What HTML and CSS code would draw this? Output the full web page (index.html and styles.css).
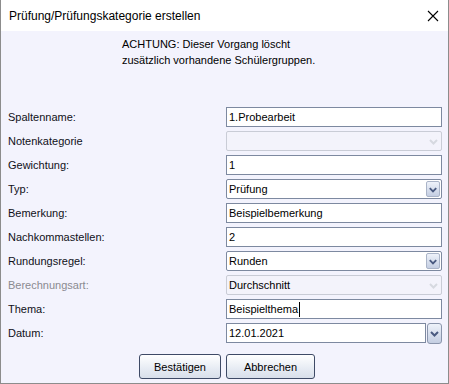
FILE: index.html
```html
<!DOCTYPE html>
<html lang="de">
<head>
<meta charset="utf-8">
<title>Prüfung/Prüfungskategorie erstellen</title>
<link rel="stylesheet" href="styles.css">
</head>
<body>
<div class="window">
  <div class="titlebar">
    <span class="title">Prüfung/Prüfungskategorie erstellen</span>
    <svg class="close" width="12" height="12" viewBox="0 0 12 12"><path d="M1 1 L11 11 M11 1 L1 11" stroke="#000" stroke-width="1.1" fill="none"/></svg>
  </div>
  <div class="body">
    <div class="notice">ACHTUNG: Dieser Vorgang löscht<br>zusätzlich vorhandene Schülergruppen.</div>
    <div class="form">
      <div class="label">Spaltenname:</div>
      <div class="field"><span class="val">1.Probearbeit</span></div>

      <div class="label">Notenkategorie</div>
      <div class="field combo disabled"><span class="val"></span><span class="arrow"><svg width="13" height="15" viewBox="0 0 13 15"><path d="M3 6 L6.5 9.5 L10 6" stroke="#d6d9e0" stroke-width="2" fill="none"/></svg></span></div>

      <div class="label">Gewichtung:</div>
      <div class="field"><span class="val">1</span></div>

      <div class="label">Typ:</div>
      <div class="field combo"><span class="val">Prüfung</span><span class="arrow btn"><svg width="13" height="15" viewBox="0 0 13 15"><path d="M3 6 L6.5 9.5 L10 6" stroke="#4a5a80" stroke-width="2" fill="none"/></svg></span></div>

      <div class="label">Bemerkung:</div>
      <div class="field"><span class="val">Beispielbemerkung</span></div>

      <div class="label">Nachkommastellen:</div>
      <div class="field"><span class="val">2</span></div>

      <div class="label">Rundungsregel:</div>
      <div class="field combo"><span class="val">Runden</span><span class="arrow btn"><svg width="13" height="15" viewBox="0 0 13 15"><path d="M3 6 L6.5 9.5 L10 6" stroke="#4a5a80" stroke-width="2" fill="none"/></svg></span></div>

      <div class="label muted">Berechnungsart:</div>
      <div class="field combo disabled"><span class="val">Durchschnitt</span><span class="arrow"><svg width="13" height="15" viewBox="0 0 13 15"><path d="M3 6 L6.5 9.5 L10 6" stroke="#d6d9e0" stroke-width="2" fill="none"/></svg></span></div>

      <div class="label">Thema:</div>
      <div class="field"><span class="val">Beispielthema</span><span class="caret"></span></div>

      <div class="label">Datum:</div>
      <div class="datum">
        <div class="field date"><span class="val">12.01.2021</span></div>
        <span class="datebtn"><svg width="13" height="15" viewBox="0 0 13 15"><path d="M3 6 L6.5 9.5 L10 6" stroke="#4a5a80" stroke-width="2" fill="none"/></svg></span>
      </div>
    </div>
    <div class="buttons">
      <button class="button b1">Bestätigen</button>
      <button class="button b2">Abbrechen</button>
    </div>
  </div>
</div>
</body>
</html>
```
FILE: styles.css
```css
html, body {
  margin: 0;
  padding: 0;
  background: #ffffff;
}
.window {
  width: 449px;
  height: 384px;
  box-sizing: border-box;
  border-left: 1px solid #8c8c8c;
  border-right: 1px solid #8c8c8c;
  border-bottom: 1px solid #8c8c8c;
  display: flex;
  flex-direction: column;
  font-family: "Liberation Sans", Arial, sans-serif;
  font-size: 11px;
  color: #101018;
}
.titlebar {
  height: 31px;
  background: #ffffff;
  display: flex;
  align-items: center;
  justify-content: space-between;
  padding: 0 9px 0 8px;
  flex: none;
}
.title {
  font-size: 12px;
  color: #000;
}
.close {
  display: block;
}
.body {
  flex: 1;
  background: #f3f3fd;
  padding-top: 5px;
}
.notice {
  margin-left: 121px;
  line-height: 16px;
  color: #000;
}
.form {
  margin-top: 39px;
  display: grid;
  grid-template-columns: 225px 216px;
  grid-auto-rows: 20px;
  row-gap: 4px;
}
.label {
  padding-left: 7px;
  display: flex;
  align-items: center;
  color: #101018;
}
.label.muted {
  color: #8a8a90;
}
.field {
  box-sizing: border-box;
  height: 20px;
  border: 1px solid #7d89a0;
  background: #ffffff;
  display: flex;
  align-items: center;
  padding-left: 2px;
}
.val {
  color: #000;
}
.combo {
  justify-content: space-between;
  padding-right: 1px;
  border-radius: 2px;
}
.combo.disabled {
  background: #f3f3fb;
  border-color: #c9ccd6;
}
.arrow {
  width: 14px;
  height: 16px;
  display: flex;
  align-items: center;
  justify-content: center;
  box-sizing: border-box;
}
.arrow.btn {
  border: 1px solid #aab4c8;
  border-radius: 2px;
  background: linear-gradient(#eef2fa, #c4cee2);
}
.arrow svg, .datebtn svg {
  display: block;
}
.caret {
  width: 1px;
  height: 15px;
  background: #000;
  margin-left: 1px;
}
.datum {
  display: flex;
  gap: 1px;
}
.field.date {
  width: 200px;
  flex: none;
}
.datebtn {
  width: 15px;
  height: 21px;
  box-sizing: border-box;
  border: 1px solid #8a95ac;
  border-radius: 3px;
  background: linear-gradient(#eef2fa, #c4cee2);
  display: flex;
  align-items: center;
  justify-content: center;
}
.buttons {
  margin-top: 11px;
  display: flex;
  gap: 5px;
  padding-left: 138px;
}
.button {
  height: 25px;
  box-sizing: border-box;
  border: 1px solid #3e4a66;
  border-radius: 3px;
  background: linear-gradient(#ffffff, #e6ebf3 60%, #d8dfea);
  font-family: "Liberation Sans", Arial, sans-serif;
  font-size: 11px;
  color: #000;
  padding: 0;
}
.b1 { width: 82px; }
.b2 { width: 89px; }
```
